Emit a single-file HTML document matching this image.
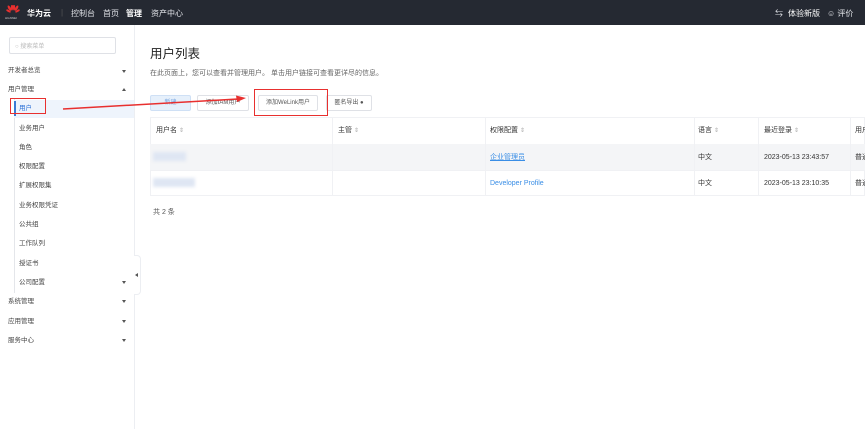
<!DOCTYPE html>
<html><head><meta charset="utf-8"><style>
*{margin:0;padding:0;box-sizing:border-box}
body{width:865px;height:429px;overflow:hidden;background:#fff;font-family:"Liberation Sans","Noto Sans CJK SC",sans-serif;color:#333;position:relative;font-size:7px;white-space:nowrap}
.top{position:absolute;left:0;top:0;width:865px;height:25px;background:#252932;color:#dfe1e6;font-size:8px}
.top span{position:absolute;top:8px}
.side{position:absolute;left:0;top:25px;width:135px;height:404px;background:#fff;border-right:1px solid #eceef2}
.si{position:absolute;font-size:6.5px;color:#444;line-height:9px}
.arr{position:absolute;left:122px;width:0;height:0;border-left:2.5px solid transparent;border-right:2.5px solid transparent;border-top:3px solid #555}
.btn{position:absolute;top:95px;height:16px;border:1px solid #dfe1e6;border-radius:2px;font-size:6px;line-height:14px;text-align:center;color:#555;background:#fff}
.red{position:absolute;border:1.5px solid #e8302f}
.th,.td{position:absolute;font-size:7px;line-height:10px}
.vl{position:absolute;top:117px;width:1px;height:79px;background:#f0f1f4}
.so{color:#aaa;font-size:6px}
</style></head><body>
<div class="top">
<svg style="position:absolute;left:6px;top:5px" width="14" height="11" viewBox="0 0 14 11"><g fill="#e8302f"><ellipse cx="4" cy="3" rx="1.3" ry="3" transform="rotate(-30 4 4)"/><ellipse cx="10" cy="3" rx="1.3" ry="3" transform="rotate(30 10 4)"/><ellipse cx="6" cy="2.5" rx="1.1" ry="3"/><ellipse cx="8" cy="2.5" rx="1.1" ry="3"/><ellipse cx="2.5" cy="6" rx="1" ry="2.5" transform="rotate(-60 2.5 6)"/><ellipse cx="11.5" cy="6" rx="1" ry="2.5" transform="rotate(60 11.5 6)"/></g></svg>
<span style="left:5px;top:16px;font-size:3px;color:#ccc">HUAWEI</span>
<span style="left:27px;color:#fff;font-weight:bold">华为云</span>
<span style="left:61px;color:#555">|</span>
<span style="left:71px">控制台</span>
<span style="left:103px">首页</span>
<span style="left:126px;color:#fff;font-weight:bold">管理</span>
<span style="left:151px">资产中心</span>
<span style="left:775px">⇆</span>
<span style="left:788px;color:#fff">体验新版</span>
<span style="left:827px">☺ 评价</span>
</div>
<div class="side">
<div style="position:absolute;left:9px;top:12px;width:107px;height:17px;border:1px solid #dfe1e6;border-radius:2px"><span style="position:absolute;left:5px;top:3px;font-size:6px;color:#bbb">○ 搜索菜单</span></div>
<div class="si" style="left:8px;top:41px">开发者总览</div><div class="arr" style="top:45px"></div>
<div class="si" style="left:8px;top:60px">用户管理</div><div class="arr" style="top:63px;border-top:0;border-bottom:3px solid #555"></div>
<div style="position:absolute;left:14px;top:74px;width:1px;height:194px;background:#e4e6ea"></div>
<div style="position:absolute;left:14px;top:75px;width:120px;height:18px;background:#eef4fc"></div>
<div style="position:absolute;left:14px;top:76px;width:2px;height:15px;background:#3a7bd5"></div>
<div class="si" style="left:19px;top:79px;color:#2b6fd6">用户</div>
<div class="si" style="left:19px;top:99px">业务用户</div>
<div class="si" style="left:19px;top:118px">角色</div>
<div class="si" style="left:19px;top:137px">权限配置</div>
<div class="si" style="left:19px;top:156px">扩展权限集</div>
<div class="si" style="left:19px;top:176px">业务权限凭证</div>
<div class="si" style="left:19px;top:195px">公共组</div>
<div class="si" style="left:19px;top:214px">工作队列</div>
<div class="si" style="left:19px;top:234px">授证书</div>
<div class="si" style="left:19px;top:253px">公司配置</div><div class="arr" style="top:256px"></div>
<div class="si" style="left:8px;top:272px">系统管理</div><div class="arr" style="top:275px"></div>
<div class="si" style="left:8px;top:292px">应用管理</div><div class="arr" style="top:295px"></div>
<div class="si" style="left:8px;top:311px">服务中心</div><div class="arr" style="top:314px"></div>
</div>
<div style="position:absolute;left:134px;top:255px;width:7px;height:40px;background:#fff;border:1px solid #eceef2;border-left:0;border-radius:0 4px 4px 0"><div style="position:absolute;left:1px;top:17px;border-right:3px solid #555;border-top:2px solid transparent;border-bottom:2px solid transparent"></div></div>
<div style="position:absolute;left:150px;top:43px;font-size:12.5px;color:#222">用户列表</div>
<div style="position:absolute;left:150px;top:68px;font-size:7px;color:#666">在此页面上，您可以查看并管理用户。 单击用户链接可查看更详尽的信息。</div>
<div class="btn" style="left:150px;width:41px;background:#e6f0fb;border-color:#cfe0f5;color:#7aa6e0">新建</div>
<div class="btn" style="left:197px;width:52px">添加IAM用户</div>
<div class="btn" style="left:258px;width:60px">添加WeLink用户</div>
<div class="btn" style="left:326px;width:46px">匿名导出 ●</div>
<div style="position:absolute;left:150px;top:117px;width:715px;height:79px;border:1px solid #f0f1f4"></div>
<div style="position:absolute;left:150px;top:144px;width:715px;height:26px;background:#f4f5f7"></div>
<div style="position:absolute;left:150px;top:170px;width:715px;height:1px;background:#f0f1f4"></div>
<div class="vl" style="left:332px"></div><div class="vl" style="left:485px"></div><div class="vl" style="left:694px"></div><div class="vl" style="left:758px"></div><div class="vl" style="left:850px"></div>
<div class="th" style="left:156px;top:126px">用户名 <span class="so">⇕</span></div>
<div class="th" style="left:338px;top:126px">主管 <span class="so">⇕</span></div>
<div class="th" style="left:490px;top:126px">权限配置 <span class="so">⇕</span></div>
<div class="th" style="left:698px;top:126px">语言 <span class="so">⇕</span></div>
<div class="th" style="left:764px;top:126px">最近登录 <span class="so">⇕</span></div>
<div class="th" style="left:855px;top:126px;width:10px;overflow:hidden">用户</div>
<div style="position:absolute;left:153px;top:152px;width:33px;height:9px;background:#dfe6f3;filter:blur(1.5px)"></div>
<div style="position:absolute;left:153px;top:178px;width:42px;height:9px;background:#dfe6f3;filter:blur(1.5px)"></div>
<div class="td" style="left:490px;top:153px;color:#3a8ee6;text-decoration:underline">企业管理员</div>
<div class="td" style="left:490px;top:179px;color:#3a8ee6">Developer Profile</div>
<div class="td" style="left:698px;top:153px">中文</div><div class="td" style="left:698px;top:179px">中文</div>
<div class="td" style="left:764px;top:153px">2023-05-13 23:43:57</div>
<div class="td" style="left:764px;top:179px">2023-05-13 23:10:35</div>
<div class="td" style="left:855px;top:153px;width:10px;overflow:hidden">普通</div><div class="td" style="left:855px;top:179px;width:10px;overflow:hidden">普通</div>
<div style="position:absolute;left:153px;top:207px;font-size:7px;color:#555">共 2 条</div>
<div class="red" style="left:10px;top:98px;width:36px;height:16px"></div>
<div class="red" style="left:254px;top:89px;width:74px;height:27px"></div>
<svg style="position:absolute;left:0;top:0" width="865" height="429"><line x1="63" y1="109" x2="238" y2="99" stroke="#e8302f" stroke-width="1.5"/><polygon points="246,98 236,95.5 237,102" fill="#e8302f"/></svg>
</body></html>
